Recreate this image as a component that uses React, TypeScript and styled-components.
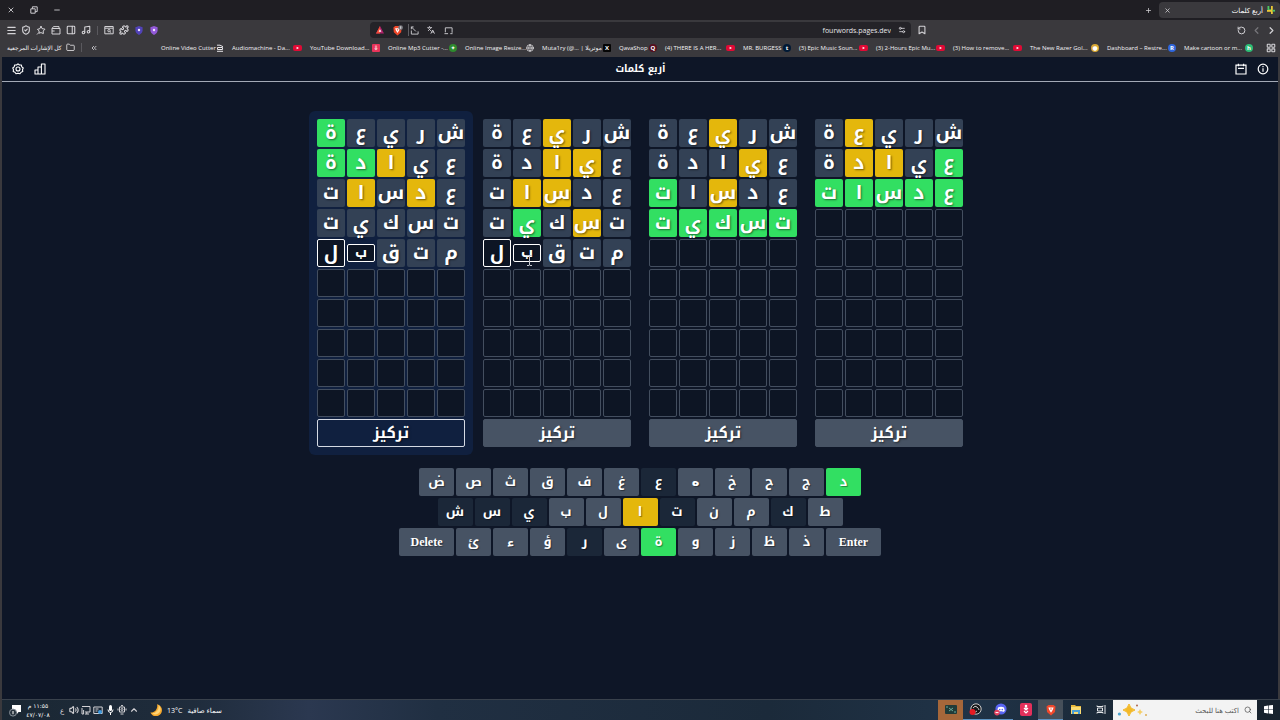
import React from "react";
import styled, { createGlobalStyle, css } from "styled-components";
import {
  X, Minus, Plus, Menu, ShieldCheck, PanelRight, Music, Puzzle, Folder, Bookmark as BookmarkIcon,
  RotateCcw, ChevronLeft, ChevronRight, ChevronUp, ChevronsLeft, LayoutGrid, Search, Volume2, Languages,
  Settings2, Globe,
} from "lucide-react";

const arabic = `"Noto Kufi Arabic", "Noto Sans Arabic", "Noto Sans", "DejaVu Sans", sans-serif`;
const ui = `"Open Sans", "Noto Sans", "DejaVu Sans", sans-serif`;

const colors = {
  absent: "#334155",
  present: "#e4b70c",
  correct: "#32df62",
  key: "#475364",
  used: "#1b2738",
};

const Global = createGlobalStyle`
  * { box-sizing: border-box; }
  body { margin: 0; background: #0e1627; color: #fff; font-family: ${ui}; }
  button, input { font: inherit; color: inherit; margin: 0; padding: 0; border: 0; background: none; }
  a { color: inherit; text-decoration: none; }
  svg { display: block; flex: none; }
`;

const Screen = styled.div`
  min-height: 100vh;
  display: flex;
  flex-direction: column;
  background: #3a393d;
`;

const Row = styled.div<{ $gap?: number }>`
  display: flex;
  align-items: center;
  gap: ${(p) => p.$gap ?? 0}px;
`;

const IconButton = styled.button<{ $lined?: boolean }>`
  display: grid;
  place-items: center;
  width: 12px;
  height: 12px;
  color: #d3d2d6;
  border-left: ${(p) => (p.$lined ? "1px solid #5f5e63" : "0")};
  .lucide { stroke-width: 2.6; }
`;

const TabStrip = styled.header`
  display: flex;
  justify-content: space-between;
  align-items: center;
  height: 20px;
  background: #1f1e23;
  padding-left: 5px;
`;

const Tab = styled.div`
  display: flex;
  align-items: center;
  width: 121px;
  height: 16px;
  padding: 0 5px 0 2px;
  border-radius: 4px;
  background: #3a393d;
  font-size: 7px;
  gap: 4px;
`;

const TabTitle = styled.span`
  flex: 1;
  text-align: right;
  direction: rtl;
`;

const Toolbar = styled.div`
  display: flex;
  align-items: center;
  height: 20px;
  padding: 0 3px 0 5px;
`;

const ToolGroup = styled.div`
  display: flex;
  align-items: center;
  gap: 3px;
  width: 365px;
`;

const Divider = styled.span<{ $space: number }>`
  width: 1px;
  height: 9px;
  background: #5a595e;
  margin: 0 ${(p) => p.$space}px;
`;

const AddressBar = styled.div`
  flex: 1;
  display: flex;
  align-items: center;
  gap: 5px;
  height: 16px;
  border-radius: 4px;
  background: #242328;
  padding: 0 3px 0 4px;
`;

const Address = styled.input`
  flex: 1;
  min-width: 0;
  text-align: right;
  font-size: 7px;
  color: #e6e5e8;
`;

const ToolEnd = styled.div`
  display: flex;
  align-items: center;
  justify-content: space-between;
  width: 366px;
  padding-left: 5px;
`;

const Bookmarks = styled.nav`
  display: flex;
  align-items: center;
  height: 17px;
  padding: 0 3px 2px 7px;
  font-size: 6px;
  font-weight: 500;
  color: #f4f3f6;
`;

const AllBookmarks = styled.button`
  display: flex;
  align-items: center;
  gap: 4px;
  white-space: nowrap;
`;

const BookmarkList = styled.div`
  flex: 1;
  display: flex;
  justify-content: flex-end;
  gap: 8px;
  margin-right: 12px;
`;

const BookmarkLink = styled.a<{ $width: number }>`
  display: flex;
  align-items: center;
  justify-content: space-between;
  width: ${(p) => p.$width}px;
  white-space: nowrap;
`;

const Badge = styled.span<{ $bg: string; $square?: boolean }>`
  display: grid;
  place-items: center;
  flex: none;
  width: 8px;
  height: 8px;
  border-radius: ${(p) => (p.$square ? 1 : 4)}px;
  background: ${(p) => p.$bg};
  font-size: 6px;
  line-height: 8px;
  font-weight: 700;
  color: #fff;
`;

const Page = styled.div`
  flex: 1;
  display: flex;
  flex-direction: column;
  margin: 0 2px;
  background: #0e1627;
`;

const PageHeader = styled.header`
  display: grid;
  grid-template-columns: 1fr auto 1fr;
  align-items: center;
  height: 25px;
  padding: 0 8px 0 9px;
  border-bottom: 1px solid #a3a9b6;
`;

const PageTitle = styled.h1`
  margin: 0;
  direction: rtl;
  font: 700 10px/20px ${arabic};
`;

const HeaderSide = styled.div<{ $end?: boolean }>`
  display: flex;
  justify-content: ${(p) => (p.$end ? "flex-end" : "flex-start")};
  gap: 8px;
`;

const HeaderButton = styled.button`
  display: grid;
  place-items: center;
  width: 14px;
  height: 14px;
`;

const Game = styled.main`
  display: flex;
  flex-direction: column;
  align-items: center;
  gap: 13px;
  padding-top: 29px;
`;

const Boards = styled.div`
  display: flex;
  gap: 2px;
`;

const Board = styled.section<{ $focused: boolean }>`
  display: flex;
  flex-direction: column;
  gap: 2px;
  padding: 8px;
  border-radius: 6px;
  background: ${(p) => (p.$focused ? "#10203f" : "transparent")};
`;

const Word = styled.div`
  display: flex;
  direction: rtl;
  align-items: center;
  gap: 2px;
  height: 28px;
`;

type Mark = "absent" | "present" | "correct" | "empty" | "typed" | "turning";

const Cell = styled.span<{ $mark: Mark }>`
  position: relative;
  display: flex;
  align-items: center;
  justify-content: center;
  width: 28px;
  height: 28px;
  border-radius: 2px;
  font: 700 19px/28px ${arabic};
  text-shadow: 1px 1px 2px rgba(0, 0, 0, 0.5);
  ${(p) =>
    p.$mark === "empty"
      ? css`background: #0d1524; border: 1px solid #434e5f;`
      : p.$mark === "typed"
      ? css`background: #0d1524; border: 1px solid #fff;`
      : p.$mark === "turning"
      ? css`background: #0d1524; border: 1px solid #fff; height: 18px; font-size: 14px; line-height: 12px;`
      : css`background: ${colors[p.$mark]};`}
`;

const FocusButton = styled.button<{ $focused: boolean }>`
  height: 28px;
  border-radius: 2px;
  direction: rtl;
  font: 700 15px/26px ${arabic};
  text-shadow: 1px 1px 2px rgba(0, 0, 0, 0.5);
  background: ${(p) => (p.$focused ? "#10203f" : colors.key)};
  border: 1px solid ${(p) => (p.$focused ? "#d5dae3" : colors.key)};
`;

const Caret = styled.svg`
  position: absolute;
  left: 12px;
  top: 10px;
`;

const Keyboard = styled.div`
  display: flex;
  flex-direction: column;
  align-items: center;
  gap: 2px;
`;

const Key = styled.button<{ $tone: "key" | "used" | "present" | "correct"; $wide?: boolean; $round?: boolean }>`
  display: grid;
  place-items: center;
  width: ${(p) => (p.$wide ? 55 : 35)}px;
  height: 28px;
  border-radius: 2px;
  background: ${(p) => colors[p.$tone]};
  font: ${(p) =>
    p.$wide
      ? `700 12px/16px "Liberation Serif", serif`
      : `700 13px/20px ${p.$round ? `"DejaVu Sans", sans-serif` : arabic}`};
  text-shadow: 1px 1px 1px rgba(0, 0, 0, 0.4);
`;

const Taskbar = styled.footer`
  display: flex;
  justify-content: space-between;
  height: 21px;
  margin-left: 2px;
  border-top: 1px solid #39414c;
  background: linear-gradient(90deg, #1a2733 0, #1f2c3c 15%, #2b3850 24%, #202f42 34%, #1b2a3a 60%, #203347 76%, #192633 90%, #17222d 100%);
`;

const Tray = styled.div`
  display: flex;
  align-items: center;
  padding-left: 7px;
  font-size: 7px;
`;

const Clock = styled.time`
  width: 28px;
  margin: 0 4px 0 3px;
  text-align: center;
  direction: rtl;
  font: 6px/9px "DejaVu Sans", sans-serif;
`;

const Weather = styled.div`
  display: flex;
  align-items: center;
  gap: 5px;
  margin-left: 10px;
`;

const Apps = styled.div`
  display: flex;
  align-items: stretch;
`;

const AppButton = styled.button<{ $bg?: string; $open?: boolean }>`
  display: grid;
  place-items: center;
  width: 25px;
  background: ${(p) => p.$bg ?? "transparent"};
  border-bottom: 1px solid ${(p) => (p.$open ? "#5d93c2" : "transparent")};
`;

const StartButton = styled(AppButton)`
  width: 23px;
`;

const SearchBox = styled.label`
  display: flex;
  align-items: center;
  gap: 5px;
  width: 144px;
  padding: 0 5px 0 4px;
  background: #f3f3f3;
  color: #444;
`;

const SearchInput = styled.input`
  flex: 1;
  min-width: 0;
  direction: rtl;
  font-size: 7px;
  &::placeholder { color: #555; opacity: 1; }
`;

const Line = ({ size = 10, children }: { size?: number; children: React.ReactNode }) => (
  <svg width={size} height={size} viewBox="0 0 10 10" fill="none" stroke="currentColor" strokeLinejoin="round">{children}</svg>
);
const Restore = () => <Line size={8}><path d="M1 3.5h5.5V9H1zM3 3.5V1h6v6H6.5" strokeWidth="1.2" /></Line>;
const Leo = () => <Line><path d="M5 1l1 2.6 3 .6L7.2 6l.2 2.6L5 7.6l-2 .6.1-2.4L1.4 4.4 4 3.6z" /><path d="M3 7.5 1 9.5" /></Line>;
const WalletIcon = () => <Line><path d="M1 3.5h8V9H1zM1 3.5 2.5 1.6H8v1.9M1 6h2.6" /></Line>;
const WindowSearch = () => <Line><path d="M.8 1.5h8.4v7.3H.8zM.8 3.2h8.4" /><circle cx="5" cy="5.7" r="1.2" /><path d="m6 6.6 1.2 1.1" /></Line>;
const Share = () => <Line size={9}><path d="M1.5 5v4H9V6M1.5 1l5 5M1.5 3.6V1H4" /></Line>;
const Laptop = () => <Line size={9}><path d="M1.5 7V2H9v5.5M.5 8.5h4M7 8.5h2.5" /></Line>;
const Display = () => <Line><path d="M1 1.5h8V7H4M5.8 7v2M4 9h4M1 3v6h1.6V5" /></Line>;
const Snip = () => (
  <Line><path d="M.8 2h8.4v6.5H.8zM2.5 4h3M2.5 6h2" /><circle cx="7" cy="7" r="2" fill="#3f9be0" stroke="none" /></Line>
);
const Camera = () => <Line><path d="M2.5 2h5v5h-5zM3.5 9h3M4 .6h2M1 3.5v2M9 3.5v2" /><circle cx="5" cy="4.5" r="1" /></Line>;
const Notice = () => (
  <svg width="12" height="13" viewBox="0 0 12 13"><path d="M3 1h9v7H9.5L8 10V8H3z" fill="#fff" /><circle cx="4" cy="8.6" r="3.5" fill="#26323d" stroke="#88919a" /><path d="M4 7v3.2" stroke="#fff" /></svg>
);

const YouTube = () => (
  <svg width="9" height="8" viewBox="0 0 9 8"><rect y="1" width="9" height="6" rx="2" fill="#e00a35" /><path d="M3.6 2.7v2.6L6 4z" fill="#fff" /></svg>
);
const Cutter = () => (
  <svg width="8" height="8" viewBox="0 0 8 8" fill="none" stroke="#e6e5e8"><path d="M1 1.2h3l3 1.5M1.5 3.5h5v2h-5zM1 7.3h6" /></svg>
);
const Brave = ({ size = 11, blocked }: { size?: number; blocked?: boolean }) => (
  <svg width={size} height={size} viewBox="0 0 12 12">
    <path d="M3.5 1h5L10.5 2.6 10 8 6 11.5 2 8 1.5 2.6z" fill="#f0482b" /><path d="M3.4 3.5h5.2L7.7 6 6 8.8 4.3 6z" fill="#fff" /><path d="M5.2 4.6h1.6L6 6.6z" fill="#f0482b" />
    {blocked && <><circle cx="9.4" cy="2.8" r="2.6" fill="#76757c" /><path d="M9.5 1.4v2.8" stroke="#fff" strokeWidth=".8" /></>}
  </svg>
);
const Shield = ({ fill }: { fill: string }) => (
  <svg width="8" height="9" viewBox="0 0 8 9"><path d="M4 0 7.6 1.2V4.6Q7.4 7.4 4 9 .6 7.4 .4 4.6V1.2z" fill={fill} /><circle cx="4" cy="4" r="1.2" fill="#f0e8ff" /></svg>
);
const Gear = () => (
  <svg width="12" height="12" viewBox="0 0 24 24" fill="none" stroke="#fff" strokeWidth="2.2" strokeLinejoin="round"><path d="m12 1.8 3 2.3 3.7-.1.9 3.7 2.9 2.3-1.5 3.5.6 3.7-3.5 1.3-2.1 3.1-4-1-4 1-2.1-3.1-3.5-1.3.6-3.7L1.5 10l2.9-2.3.9-3.7 3.7.1z" /><circle cx="12" cy="12" r="4" /></svg>
);
const Bars = () => (
  <svg width="12" height="12" viewBox="0 0 12 12" fill="none" stroke="#fff" strokeWidth="1.1" strokeLinejoin="round"><path d="M1 7h3v4H1zM4 4h3.4v7H4zM7.4 1H11v10H7.4z" /></svg>
);
const Calendar = () => (
  <svg width="12" height="12" viewBox="0 0 12 12" fill="none" stroke="#fff" strokeWidth="1.2"><path d="M1 2.2h10V11H1zM3.4.7v2.6M8.6.7v2.6M3 5.3h6" /></svg>
);
const Info = () => (
  <svg width="12" height="12" viewBox="0 0 12 12" fill="none" stroke="#fff" strokeWidth="1.2"><circle cx="6" cy="6" r="4.8" /><path d="M6 5.2v3.6M6 3v1.3" /></svg>
);
const Windows = () => (
  <svg width="9" height="9" viewBox="0 0 9 9" fill="#fff"><path d="M0 1.2 4 .6v3.7H0zM4.6.5 9 0v4.3H4.6zM0 4.8h4v3.6l-4-.6zM4.6 4.8H9V9l-4.4-.6z" /></svg>
);
const Moon = () => (
  <svg width="12" height="12" viewBox="0 0 12 12"><path d="M7 .3A6 6 0 1 1 .4 8.5 6.4 6.4 0 0 0 7 .3z" fill="#f6a92d" /><path d="M8.5 1A7 7 0 0 1 2 9.4 5.2 5.2 0 0 0 8.5 1z" fill="#ffd477" /></svg>
);
const FourLogo = () => (
  <svg width="8" height="8" viewBox="0 0 8 8" fill="none" strokeWidth="1.8"><path d="M1.4 0v4.2H4" stroke="#4dc663" /><path d="M0 4.9h4.6" stroke="#e9c735" /><path d="M4.9 0v8" stroke="#e9c735" /><path d="M5.6 4.7H8" stroke="#4dc663" /></svg>
);
const TaskView = () => (
  <svg width="10" height="9" viewBox="0 0 10 9" fill="none" stroke="#e2e5e8"><path d="M1.5 3h5v3h-5zM1 .5v1h6v-1M1 8.5v-1h6v1M9 0v9" /></svg>
);
const Explorer = () => (
  <svg width="12" height="11" viewBox="0 0 12 11"><path d="M1 1h4l1 1h5v8H1z" fill="#e8b93c" /><path d="M1 3h10v7H1z" fill="#fbdc72" /><path d="M2 6h8v4H8V8H4v2H2z" fill="#4b9fd5" /></svg>
);
const Obs = () => (
  <svg width="13" height="13" viewBox="0 0 13 13"><circle cx="7" cy="6" r="5.2" fill="#17181b" stroke="#c8c8c8" /><path d="M4 5q2-3 4-1t2 3M8 8q-2 2-3 0" fill="none" stroke="#c8c8c8" /><circle cx="3.5" cy="9" r="3" fill="#e51b23" /></svg>
);
const Discord = () => (
  <svg width="13" height="13" viewBox="0 0 13 13"><circle cx="7" cy="6" r="5.6" fill="#5865f2" /><path d="M4 4.5q3-1.6 6 0l.8 3.6L9 9l-.6-.8H5.6L5 9l-1.8-.9z" fill="#fff" /><circle cx="5.7" cy="6.6" r=".8" fill="#5865f2" /><circle cx="8.3" cy="6.6" r=".8" fill="#5865f2" /><circle cx="3" cy="9.6" r="2.8" fill="#e2415d" /><path d="M1.5 9.6h3" stroke="#fff" /></svg>
);
const Download = () => (
  <svg width="12" height="13" viewBox="0 0 12 13"><rect width="12" height="13" rx="2" fill="#e3305b" /><path d="M6 2v5M4 5l2 2 2-2M4 8l2 2 2-2" fill="none" stroke="#fff" strokeWidth="1.2" /><circle cx="6" cy="3" r="1.3" fill="#fff" /></svg>
);
const GameTile = () => (
  <svg width="12" height="9" viewBox="0 0 12 9"><rect width="12" height="9" rx="1" fill="#203b39" /><path d="m4 3 4 3M8 3 4 6M1 2h2M9 7h2" stroke="#6aa99b" fill="none" /></svg>
);
const Sparkles = () => (
  <svg width="34" height="14" viewBox="0 0 34 14"><path d="M12 1q1 5 6 6-5 1-6 6-1-5-6-6 5-1 6-6z" fill="#f3b928" stroke="#f3b928" /><path d="M23 6q.6 2.4 3 3-2.4.6-3 3-.6-2.4-3-3 2.4-.6 3-3z" fill="#f5cf67" /><circle cx="2.4" cy="11" r="1.6" fill="#4ca3cf" /><circle cx="20" cy="2.5" r="1" fill="#b0674a" /><circle cx="29" cy="12" r="1" fill="#dcae54" /></svg>
);
const Mic = () => (
  <svg width="7" height="10" viewBox="0 0 7 10"><rect x="2" width="3" height="6" rx="1.5" fill="#fff" /><path d="M1 4.5q0 3 2.5 3T6 4.5M3.5 7.5V10" fill="none" stroke="#fff" /></svg>
);

const bookmarks: { label: string; width: number; icon: React.ReactNode }[] = [
  { label: "Online Video Cutter", width: 63, icon: <Cutter /> },
  { label: "Audiomachine - Da...", width: 70, icon: <YouTube /> },
  { label: "YouTube Download...", width: 70, icon: <Badge $bg="#e8345a" $square>⇩</Badge> },
  { label: "Online Mp3 Cutter -...", width: 69, icon: <Badge $bg="#2e8b2e">✦</Badge> },
  { label: "Online Image Resize...", width: 69, icon: <Globe size={8} /> },
  { label: "Muta1ry (@... | موتريلا", width: 69, icon: <Badge $bg="#050505" $square>X</Badge> },
  { label: "QavaShop", width: 38, icon: <Badge $bg="#56101f">Q</Badge> },
  { label: "(4) THERE IS A HER...", width: 70, icon: <YouTube /> },
  { label: "MR. BURGESS", width: 48, icon: <Badge $bg="#001935">t</Badge> },
  { label: "(3) Epic Music Soun...", width: 69, icon: <YouTube /> },
  { label: "(3) 2-Hours Epic Mu...", width: 69, icon: <YouTube /> },
  { label: "(3) How to remove...", width: 69, icon: <YouTube /> },
  { label: "The New Razer Gol...", width: 69, icon: <Badge $bg="#d9a834">●</Badge> },
  { label: "Dashboard – Restre...", width: 69, icon: <Badge $bg="#2f66dc">R</Badge> },
  { label: "Make cartoon or m...", width: 69, icon: <Badge $bg="#2dbd76">h</Badge> },
];

const marks: Record<string, Mark> = { a: "absent", p: "present", c: "correct", t: "typed", x: "turning" };
// Each guess is a word and, letter by letter, its marks.
const boards: [string, string][][] = [
  [["شريعة", "aaaac"], ["عيادة", "aapcc"], ["عدسات", "apapa"], ["تسكيت", "aaaaa"], ["متقبل", "aaaxt"]],
  [["شريعة", "aapaa"], ["عيادة", "appaa"], ["عدسات", "aappa"], ["تسكيت", "apaca"], ["متقبل", "aaaxt"]],
  [["شريعة", "aapaa"], ["عيادة", "apaaa"], ["عدسات", "aapac"], ["تسكيت", "ccccc"]],
  [["شريعة", "aaapa"], ["عيادة", "cappa"], ["عدسات", "ccccc"]],
];

const keyRows = ["ضصثقفغعهخحجد", "شسيبلاتنمكط", "ئءؤرىةوزظذ"];
const toneOf = (k: string) =>
  "دة".includes(k) ? "correct" : k === "ا" ? "present" : "عشسيتكر".includes(k) ? "used" : "key";

export default function App() {
  return (
    <Screen>
      <Global />
      <TabStrip>
        <Row $gap={11}>
          <IconButton aria-label="Close window"><X size={8} /></IconButton>
          <IconButton aria-label="Restore"><Restore /></IconButton>
          <IconButton aria-label="Minimise"><Minus size={8} /></IconButton>
        </Row>
        <Row $gap={5}>
          <IconButton aria-label="New tab"><Plus size={7} /></IconButton>
          <Tab>
            <IconButton aria-label="Close tab"><X size={7} /></IconButton>
            <TabTitle>أربع كلمات</TabTitle>
            <FourLogo />
          </Tab>
        </Row>
      </TabStrip>

      <Toolbar>
        <ToolGroup>
          <IconButton aria-label="Menu"><Menu size={11} /></IconButton>
          <IconButton aria-label="VPN"><ShieldCheck size={10} /></IconButton>
          <IconButton aria-label="Assistant"><Leo /></IconButton>
          <IconButton aria-label="Wallet"><WalletIcon /></IconButton>
          <IconButton aria-label="Side panel"><PanelRight size={10} /></IconButton>
          <IconButton aria-label="Media"><Music size={10} /></IconButton>
          <Divider $space={2} />
          <IconButton aria-label="Window search"><WindowSearch /></IconButton>
          <IconButton aria-label="Extensions"><Puzzle size={10} /></IconButton>
          <IconButton aria-label="Extension one"><Shield fill="#5142b8" /></IconButton>
          <IconButton aria-label="Extension two"><Shield fill="#9259d8" /></IconButton>
        </ToolGroup>
        <AddressBar>
          <IconButton aria-label="Rewards">
            <svg width="8" height="8" viewBox="0 0 8 8"><path d="M4 0 8 7.5H0z" fill="#b0226a" /><path d="M4 0 0 7.5h4z" fill="#f04a35" /><path d="m4 3.3 1.4 2.5H2.6z" fill="#fff" /></svg>
          </IconButton>
          <IconButton aria-label="Shields"><Brave blocked /></IconButton>
          <IconButton aria-label="Share" $lined><Share /></IconButton>
          <IconButton aria-label="Translate"><Languages size={8} /></IconButton>
          <IconButton aria-label="Send to device"><Laptop /></IconButton>
          <Address aria-label="Address" defaultValue="fourwords.pages.dev" />
          <IconButton aria-label="Site settings"><Settings2 size={8} /></IconButton>
        </AddressBar>
        <ToolEnd>
          <IconButton aria-label="Bookmark page"><BookmarkIcon size={10} /></IconButton>
          <Row $gap={3}>
            <IconButton aria-label="Reload"><RotateCcw size={9} /></IconButton>
            <IconButton aria-label="Forward"><ChevronLeft size={11} color="#77767b" /></IconButton>
            <IconButton aria-label="Back"><ChevronRight size={11} /></IconButton>
          </Row>
        </ToolEnd>
      </Toolbar>

      <Bookmarks aria-label="Bookmarks">
        <AllBookmarks><span dir="rtl">كل الإشارات المرجعية</span><Folder size={9} /></AllBookmarks>
        <Divider $space={6} />
        <IconButton aria-label="More bookmarks"><ChevronsLeft size={8} /></IconButton>
        <BookmarkList>
          {bookmarks.map((b) => (
            <BookmarkLink key={b.label} href="#" $width={b.width}><span>{b.label}</span>{b.icon}</BookmarkLink>
          ))}
        </BookmarkList>
        <IconButton aria-label="Tab groups"><LayoutGrid size={10} /></IconButton>
      </Bookmarks>

      <Page>
        <PageHeader>
          <HeaderSide>
            <HeaderButton aria-label="Settings"><Gear /></HeaderButton>
            <HeaderButton aria-label="Statistics"><Bars /></HeaderButton>
          </HeaderSide>
          <PageTitle>أربع كلمات</PageTitle>
          <HeaderSide $end>
            <HeaderButton aria-label="Calendar"><Calendar /></HeaderButton>
            <HeaderButton aria-label="Help"><Info /></HeaderButton>
          </HeaderSide>
        </PageHeader>
        <Game>
          <Boards>
            {boards.map((guesses, b) => (
              <Board key={b} $focused={b === 0}>
                {Array.from({ length: 10 }, (_, r) => (
                  <Word key={r}>
                    {Array.from({ length: 5 }, (_, c) => {
                      const guess = guesses[r];
                      const mark = guess ? marks[guess[1][c]] : "empty";
                      return (
                        <Cell key={c} $mark={mark}>
                          {guess?.[0][c]}
                          {b === 1 && mark === "turning" && (
                            <Caret width="7" height="11" viewBox="0 0 7 11" fill="none" stroke="#c6c9d0"><path d="M1 .5h2l.5.5.5-.5h2M3.5 1v9M1 10.5h2l.5-.5.5.5h2" /></Caret>
                          )}
                        </Cell>
                      );
                    })}
                  </Word>
                ))}
                <FocusButton $focused={b === 0}>تركيز</FocusButton>
              </Board>
            ))}
          </Boards>
          <Keyboard>
            {keyRows.map((row, i) => (
              <Row key={row} $gap={2}>
                {i === 2 && <Key $tone="key" $wide>Delete</Key>}
                {[...row].map((k) => <Key key={k} $tone={toneOf(k)} $round={k === "ه"}>{k}</Key>)}
                {i === 2 && <Key $tone="key" $wide>Enter</Key>}
              </Row>
            ))}
          </Keyboard>
        </Game>
      </Page>

      <Taskbar>
        <Tray>
          <IconButton aria-label="Notifications"><Notice /></IconButton>
          <Clock>١١:٥٥ م<br />٤٧/٠٧/٠٨</Clock>
          <Row>
            <IconButton aria-label="Input language">ع</IconButton>
            <IconButton aria-label="Volume"><Volume2 size={10} /></IconButton>
            <IconButton aria-label="Display"><Display /></IconButton>
            <IconButton aria-label="Screen tools"><Snip /></IconButton>
            <IconButton aria-label="Microphone"><Mic /></IconButton>
            <IconButton aria-label="Camera"><Camera /></IconButton>
            <IconButton aria-label="Hidden icons"><ChevronUp size={10} /></IconButton>
          </Row>
          <Weather><Moon /><span>13°C</span><span dir="rtl">سماء صافية</span></Weather>
        </Tray>
        <Apps>
          <AppButton $bg="#a5673a" aria-label="Game"><GameTile /></AppButton>
          <AppButton $open aria-label="OBS"><Obs /></AppButton>
          <AppButton $open aria-label="Discord"><Discord /></AppButton>
          <AppButton aria-label="Downloader"><Download /></AppButton>
          <AppButton $bg="#46505a" $open aria-label="Brave"><Brave size={12} /></AppButton>
          <AppButton aria-label="Explorer"><Explorer /></AppButton>
          <AppButton aria-label="Task view"><TaskView /></AppButton>
          <SearchBox>
            <Sparkles />
            <SearchInput aria-label="Search" placeholder="اكتب هنا للبحث" />
            <Search size={8} />
          </SearchBox>
          <StartButton aria-label="Start"><Windows /></StartButton>
        </Apps>
      </Taskbar>
    </Screen>
  );
}
